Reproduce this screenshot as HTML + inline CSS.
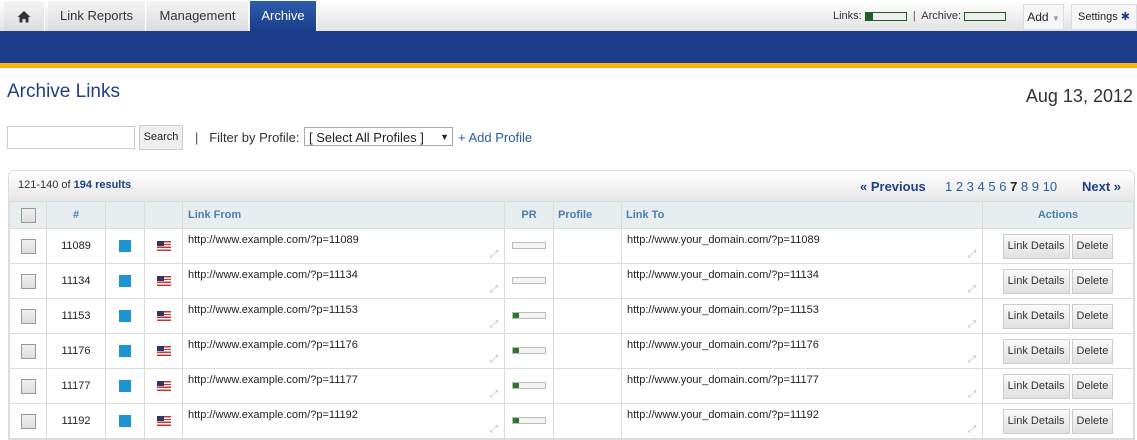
<!DOCTYPE html><html><head><style>
body{margin:0;width:1137px;height:439px;overflow:hidden;font-family:"Liberation Sans",sans-serif;background:#fff;color:#222}
.nav{height:31px;background:linear-gradient(#fff,#e2e2e2);position:relative}
.tab{position:absolute;top:1px;height:30px;line-height:30px;font-size:13px;color:#333;text-align:center;background:linear-gradient(#f4f4f4,#dcdcdc);border-right:1px solid #fff}
.blue{height:32px;background:#1a3c8a}.yel{height:5px;background:#f9b60e}
h1{position:absolute;left:7px;top:81px;margin:0;font-size:19px;font-weight:normal;color:#1f3f8a}
.date{position:absolute;right:4px;top:86px;font-size:18px;color:#333}
.box{position:absolute;left:8px;top:170px;width:1125px;border:1px solid #ddd;border-radius:6px 6px 0 0}
.bar{height:30px;background:linear-gradient(#fff,#e6e6e6);border-radius:6px 6px 0 0;font-size:11px;position:relative}
table{border-collapse:collapse;width:100%;font-size:11px;table-layout:fixed;line-height:13px}
td,th{border:1px solid #dcdcdc;padding:0;box-sizing:border-box}
th{background:#e8edf0;height:27px;color:#4a7fb0;font-size:11px}
tr.r{height:35px}
td{height:35px;vertical-align:middle;overflow:hidden}
.cb{display:inline-block;width:13px;height:13px;border:1px solid #999;background:linear-gradient(#f0f0f0,#ddd);vertical-align:middle}
.sq{display:inline-block;width:12px;height:12px;background:#1e94d2;vertical-align:middle}
.fl{display:inline-block;width:14px;height:10px;background:repeating-linear-gradient(#c33 0 1.4px,#fff 1.4px 2.8px);position:relative;vertical-align:middle}
.fl:before{content:"";position:absolute;left:0;top:0;width:7px;height:5px;background:#336}
.u{position:relative;vertical-align:top;padding:5px 5px 0}
.ar{position:absolute;right:6px;bottom:3px;color:#bbb;font-size:10px;line-height:10px}
.pr{display:inline-block;width:32px;height:5px;border:1px solid #bbb;background:#f4f4f4;position:relative;vertical-align:middle}
.pr.g:before{content:"";position:absolute;left:0;top:0;width:6px;height:5px;background:#2a7a2a}
.btn{display:inline-block;border:1px solid #ccc;background:linear-gradient(#fafafa,#e0e0e0);padding:0 4px;height:23px;line-height:23px;font-size:11px;color:#333;margin:0 1px;vertical-align:middle}
</style></head><body>
<div class="nav">
<div class="tab" style="left:4px;width:40px"><svg width="14" height="13" viewBox="0 0 14 13" style="vertical-align:middle"><path d="M7 1L0.5 7H2.5V12.5H5.5V9H8.5V12.5H11.5V7H13.5Z" fill="#333"/></svg></div>
<div class="tab" style="left:48px;width:97px">Link Reports</div>
<div class="tab" style="left:147px;width:101px">Management</div>
<div class="tab" style="left:250px;width:66px;background:linear-gradient(#2f5db0,#1a3c8a);color:#fff">Archive</div>
<div style="position:absolute;left:833px;top:10px;font-size:11px;color:#333">Links: <span style="display:inline-block;width:40px;height:7px;border:1px solid #1d5e2b;vertical-align:middle;background:linear-gradient(90deg,#1d5e2b 7px,#eee 7px)"></span> &nbsp;<span style="color:#844">|</span>&nbsp; Archive: <span style="display:inline-block;width:40px;height:7px;border:1px solid #1d5e2b;vertical-align:middle;background:#eee"></span></div>
<div style="position:absolute;left:1023px;top:4px;width:39px;height:24px;border:1px solid #ddd;background:#f6f6f6;font-size:12px;line-height:24px;text-align:center">Add <span style="color:#999;font-size:8px">▼</span></div>
<div style="position:absolute;left:1071px;top:4px;width:64px;height:24px;border:1px solid #ddd;background:#f6f6f6;font-size:11px;line-height:24px;text-align:center">Settings <span style="color:#1a3c8a">✱</span></div>
</div>
<div class="blue"></div><div class="yel"></div>
<h1>Archive Links</h1><div class="date">Aug 13, 2012</div>
<div style="position:absolute;left:7px;top:126px;width:126px;height:21px;border:1px solid #ccc"></div>
<div style="position:absolute;left:139px;top:125px;width:42px;height:23px;border:1px solid #ccc;background:#eee;font-size:11px;line-height:23px;text-align:center">Search</div>
<div style="position:absolute;left:195px;top:130px;font-size:13px;color:#333"><span style="color:#446">|</span> &nbsp; Filter by Profile:</div>
<div style="position:absolute;left:304px;top:127px;height:19px;border:1px solid #aaa;font-size:13px;line-height:19px;padding-left:4px;box-sizing:border-box;width:149px">[ Select All Profiles ] <span style="font-size:9px;float:right;margin-right:3px">▼</span></div>
<div style="position:absolute;left:458px;top:130px;font-size:13px;color:#2a5da8">+ Add Profile</div>
<div class="box"><div class="bar">
<span style="position:absolute;left:9px;top:8px;color:#333">121-140 of <b style="color:#1f3f8a">194 results</b></span>
<span style="position:absolute;left:851px;top:8px;font-size:13px;color:#1f3f8a;font-weight:bold">« Previous</span>
<span style="position:absolute;left:936px;top:8px;font-size:13px;color:#2a5da8">1 2 3 4 5 6 <b style="color:#222">7</b> 8 9 10</span>
<span style="position:absolute;left:1073px;top:8px;font-size:13px;color:#1f3f8a;font-weight:bold">Next »</span>
</div>
<table>
<colgroup><col style="width:37px"><col style="width:59px"><col style="width:39px"><col style="width:38px"><col style="width:322px"><col style="width:49px"><col style="width:68px"><col style="width:361px"><col></colgroup>
<tr><th><span class="cb"></span></th><th>#</th><th></th><th></th><th style="text-align:left;padding-left:5px">Link From</th><th>PR</th><th style="text-align:left;padding-left:4px">Profile</th><th style="text-align:left;padding-left:4px">Link To</th><th>Actions</th></tr>
<tr class="r"><td align=center><span class="cb"></span></td><td align=center>11089</td><td align=center><span class="sq"></span></td><td align=center><span class="fl"></span></td><td class="u">http://www.example.com/?p=11089<span class="ar">⤢</span></td><td align=center><span class="pr"></span></td><td></td><td class="u">http://www.your_domain.com/?p=11089<span class="ar">⤢</span></td><td align=center><span class="btn">Link Details</span><span class="btn">Delete</span></td></tr>
<tr class="r"><td align=center><span class="cb"></span></td><td align=center>11134</td><td align=center><span class="sq"></span></td><td align=center><span class="fl"></span></td><td class="u">http://www.example.com/?p=11134<span class="ar">⤢</span></td><td align=center><span class="pr"></span></td><td></td><td class="u">http://www.your_domain.com/?p=11134<span class="ar">⤢</span></td><td align=center><span class="btn">Link Details</span><span class="btn">Delete</span></td></tr>
<tr class="r"><td align=center><span class="cb"></span></td><td align=center>11153</td><td align=center><span class="sq"></span></td><td align=center><span class="fl"></span></td><td class="u">http://www.example.com/?p=11153<span class="ar">⤢</span></td><td align=center><span class="pr g"></span></td><td></td><td class="u">http://www.your_domain.com/?p=11153<span class="ar">⤢</span></td><td align=center><span class="btn">Link Details</span><span class="btn">Delete</span></td></tr>
<tr class="r"><td align=center><span class="cb"></span></td><td align=center>11176</td><td align=center><span class="sq"></span></td><td align=center><span class="fl"></span></td><td class="u">http://www.example.com/?p=11176<span class="ar">⤢</span></td><td align=center><span class="pr g"></span></td><td></td><td class="u">http://www.your_domain.com/?p=11176<span class="ar">⤢</span></td><td align=center><span class="btn">Link Details</span><span class="btn">Delete</span></td></tr>
<tr class="r"><td align=center><span class="cb"></span></td><td align=center>11177</td><td align=center><span class="sq"></span></td><td align=center><span class="fl"></span></td><td class="u">http://www.example.com/?p=11177<span class="ar">⤢</span></td><td align=center><span class="pr g"></span></td><td></td><td class="u">http://www.your_domain.com/?p=11177<span class="ar">⤢</span></td><td align=center><span class="btn">Link Details</span><span class="btn">Delete</span></td></tr>
<tr class="r"><td align=center><span class="cb"></span></td><td align=center>11192</td><td align=center><span class="sq"></span></td><td align=center><span class="fl"></span></td><td class="u">http://www.example.com/?p=11192<span class="ar">⤢</span></td><td align=center><span class="pr g"></span></td><td></td><td class="u">http://www.your_domain.com/?p=11192<span class="ar">⤢</span></td><td align=center><span class="btn">Link Details</span><span class="btn">Delete</span></td></tr>
</table></div>
</body></html>
